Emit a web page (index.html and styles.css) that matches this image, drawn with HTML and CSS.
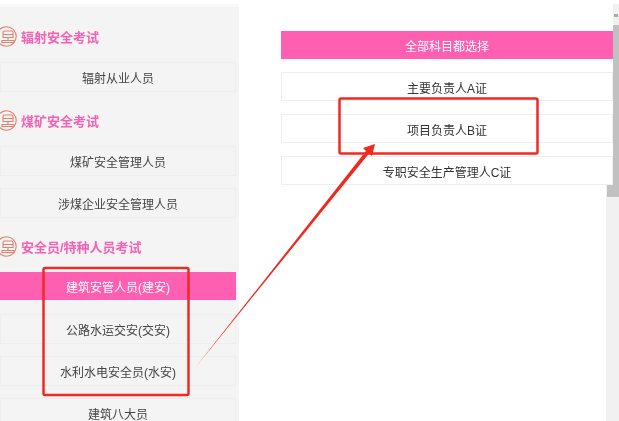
FILE: index.html
```html
<!DOCTYPE html>
<html lang="zh">
<head>
<meta charset="utf-8">
<title>考试科目选择</title>
<link rel="stylesheet" href="styles.css">
</head>
<body>
<div class="page">
  <aside class="side">
    <h2 class="head"><svg class="ico" viewBox="0 0 21 21"><circle cx="10.500" cy="10.500" r="9.700"/><path d="M7 11.500V6.500Q7 5 8.500 5h7Q17 5 17 6.500V11.500ZM7 8.500h10M12 11.500v3M6 14.500h12v2H6Z"/></svg>辐射安全考试</h2>
    <div class="opt">辐射从业人员</div>
    <h2 class="head"><svg class="ico" viewBox="0 0 21 21"><circle cx="10.500" cy="10.500" r="9.700"/><path d="M7 11.500V6.500Q7 5 8.500 5h7Q17 5 17 6.500V11.500ZM7 8.500h10M12 11.500v3M6 14.500h12v2H6Z"/></svg>煤矿安全考试</h2>
    <div class="opt">煤矿安全管理人员</div>
    <div class="opt">涉煤企业安全管理人员</div>
    <h2 class="head"><svg class="ico" viewBox="0 0 21 21"><circle cx="10.500" cy="10.500" r="9.700"/><path d="M7 11.500V6.500Q7 5 8.500 5h7Q17 5 17 6.500V11.500ZM7 8.500h10M12 11.500v3M6 14.500h12v2H6Z"/></svg>安全员/特种人员考试</h2>
    <div class="opt on">建筑安管人员(建安)</div>
    <div class="opt">公路水运交安(交安)</div>
    <div class="opt">水利水电安全员(水安)</div>
    <div class="opt">建筑八大员</div>
  </aside>
  <main class="main">
    <div class="all">全部科目都选择</div>
    <div class="sub">主要负责人A证</div>
    <div class="sub">项目负责人B证</div>
    <div class="sub">专职安全生产管理人C证</div>
  </main>
  <div class="scroll"><span class="arrow"></span><span class="thumb"></span></div>
</div>
<svg class="marks" viewBox="0 0 619 421">
  <rect class="box" x="43.500" y="268" width="145" height="127" rx="1.500"/>
  <rect class="box" x="339.500" y="98.500" width="198" height="55" rx="1.500"/>
  <polygon class="arr" points="195,368 366,151 363,148 375,144 372,156 369,153.500"/>
</svg>
</body>
</html>
```
FILE: styles.css
```css
* { box-sizing: border-box; }
html, body { margin: 0; height: 100%; overflow: hidden; background: #fff; }
body { font-family: "Liberation Sans", "Noto Sans CJK SC", sans-serif; font-size: 12px; color: #444; }
.page { position: relative; display: flex; align-items: flex-start; width: 619px; height: 421px; overflow: hidden; background: linear-gradient(#fafafa, #fafafa) 0 4px / 273px 3px no-repeat; filter: blur(0.3px); }
.side { width: 239px; height: 414px; flex: none; margin-top: 7px; padding: 13px 3px 0 0; background: #f4f4f4; overflow: hidden; }
.head { display: flex; align-items: center; gap: 4px; height: 32px; margin: 0 0 10px; font-size: 13px; font-weight: 700; color: #f562b3; }
.ico { width: 21px; height: 21px; flex: none; margin-left: -4px; fill: none; stroke: #e2806f; stroke-width: 1.1; }
.opt { display: flex; align-items: center; justify-content: center; height: 30px; margin-bottom: 12px; border: 1px solid #eeeeee; }
.opt + .head { margin-top: 12px; }
.opt.on { height: 28px; margin-bottom: 14px; border: 0; background: #ff5fb0; color: #fff; }
.main { position: relative; z-index: 1; width: 374px; flex: none; padding: 31px 0 0 42px; background: #fff; }
.all { display: flex; align-items: center; justify-content: center; height: 28px; margin-bottom: 13px; background: #ff5fb0; color: #fff; }
.sub { display: flex; align-items: center; justify-content: center; height: 29px; margin-bottom: 13px; padding-top: 2px; border: 1px solid #eeeeee; color: #333; }
.sub:last-child { margin-bottom: 0; }
.scroll { position: absolute; right: 0; top: 4px; bottom: 0; width: 13px; display: flex; flex-direction: column; align-items: flex-end; background: #f1f1f1; }
.arrow { flex: none; height: 21px; width: 6px; background: linear-gradient(#a9a9a9, #a9a9a9) 1px 10px / 4px 3px no-repeat; }
.thumb { flex: none; width: 12px; height: 172px; background: #c1c1c1; }
.marks { position: absolute; left: 0; top: 0; width: 619px; height: 421px; pointer-events: none; }
.box { fill: none; stroke: #ee2a22; stroke-width: 2.500; }
.arr { fill: #f0281e; }
```
